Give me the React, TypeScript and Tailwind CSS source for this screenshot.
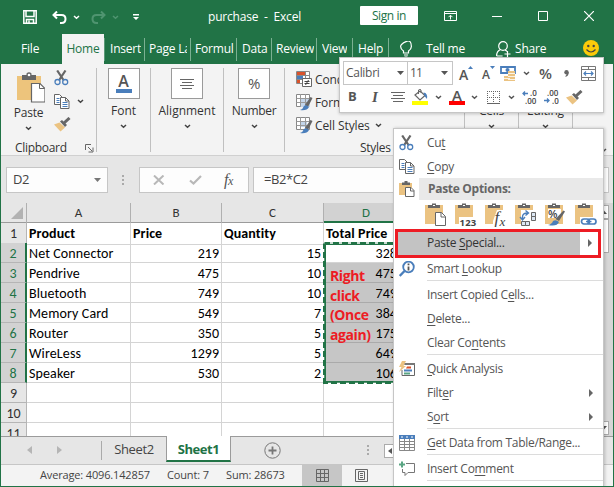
import React from "react";

type P = { className?: string };

const Chevron = ({ className = "" }: P) => (
  <svg width="7" height="5" viewBox="0 0 7 5" className={`shrink-0 ${className}`} fill="none" stroke="currentColor" strokeWidth="1.5">
    <path d="M1 1l2.5 2.3L6 1" />
  </svg>
);

const Triangle = ({ className = "" }: P) => (
  <svg width="7" height="4" viewBox="0 0 7 4" className={`shrink-0 ${className}`} fill="currentColor">
    <path d="M0 0h7L3.5 4z" />
  </svg>
);

const Scissors = () => (
  <svg width="16" height="16" viewBox="0 0 16 16" fill="none" className="shrink-0">
    <path d="M3.2 0.5l6.3 9.5M11.5 0.5L5.200 10" stroke="#666" strokeWidth="2.200" />
    <circle cx="3.500" cy="12" r="2.500" stroke="#4a7ebb" strokeWidth="1.300" />
    <circle cx="11.200" cy="12" r="2.500" stroke="#4a7ebb" strokeWidth="1.300" />
  </svg>
);

const CopyIcon = () => (
  <svg width="16" height="15" viewBox="0 0 16 15" fill="#fff" stroke="#666" className="shrink-0">
    <path d="M.5 .5h5l3 3v7h-8z" />
    <path d="M2.500 4.500h3M2.500 6.500h3M2.500 8.500h3" stroke="#4a7ebb" />
    <path d="M6.500 3.500h5l3.500 3.500v7.500h-8.500z" />
    <path d="M11.500 3.500v3.500h3.500" fill="none" />
    <path d="M8.500 8.500h5M8.500 10.500h5M8.500 12.500h5" stroke="#4a7ebb" />
  </svg>
);

const Brush = () => (
  <svg width="17" height="15" viewBox="0 0 17 15" className="shrink-0">
    <path d="M0 7.500l5.500-2 5.500 5L6.500 14.500z" fill="#ebc382" />
    <path d="M6 4.500l2-1.500 5 5-2 2z" fill="#666" />
    <path d="M9.500 6.500L15.500 1" stroke="#666" strokeWidth="3" />
  </svg>
);

const PasteBig = () => (
  <svg width="28" height="31" viewBox="0 0 28 31" className="shrink-0">
    <path d="M0 4h24v24H0z" fill="#edc47c" />
    <path d="M5 3h4.500V1.500Q12 -1 14.500 1.500V3H19v5H5z" fill="#666" />
    <circle cx="12" cy="3" r="1.300" fill="#fff" />
    <path d="M14.500 11.500h8.500l5 5v13.500H14.500z" fill="#fff" stroke="#666" strokeWidth="1.200" />
    <path d="M22.500 11.500v5h5" fill="none" stroke="#666" />
  </svg>
);

const PasteSmall = () => (
  <svg width="16" height="16" viewBox="0 0 16 16" className="shrink-0">
    <path d="M0 2h13v12H0z" fill="#ebc382" />
    <path d="M3 1.500h2.500V0h3v1.500H11V4H3z" fill="#666" />
    <path d="M6.500 6.500h5.500l3 3v6H6.500z" fill="#fff" stroke="#666" />
    <path d="M11.500 6.500v3.500h3.500" fill="none" stroke="#666" />
  </svg>
);

const PasteOption = ({ kind }: { kind: string }) => (
  <svg width="22" height="24" viewBox="0 0 22 24" className="shrink-0">
    <path d="M0 2h18v19H0z" fill="#ebc382" />
    <path d="M3 2h4V.5h4V2h4v3H3z" fill="#666" />
    <path d="M8 2h2v1H8z" fill="#fff" />
    {kind === "paste" && (
      <g fill="#fff" stroke="#666">
        <path d="M10.500 9.500h6l4 4v9h-10z" />
        <path d="M16 9.500v4.500h4.500" fill="none" />
      </g>
    )}
    {kind === "values" && (
      <g>
        <path d="M4 14h14v8H4z" fill="#fff" />
        <text x="4.500" y="23" fontSize="9.500" fontWeight="700" fill="#444" fontFamily="Open Sans, sans-serif" textLength="16.500">123</text>
      </g>
    )}
    {kind === "fx" && (
      <g>
        <path d="M12 7h8v15H8v-4z" fill="#fff" />
        <text x="9.500" y="20" fontSize="17" fontStyle="italic" fill="#444" fontFamily="Liberation Serif, serif">f</text>
        <text x="14.500" y="22.500" fontSize="13" fontStyle="italic" fill="#444" fontFamily="Liberation Serif, serif">x</text>
      </g>
    )}
    {kind === "transpose" && (
      <g>
        <path d="M6 7h12v14H6z" fill="#fff" />
        <path d="M7.500 16v-2q0-4 5-4M10.500 7.500l3 2.500-3 2.500M5 14l2.500 3L10 14" fill="none" stroke="#4a7ebb" strokeWidth="1.400" />
        <path d="M16.500 9.500h4v4h-4zM16.500 13.500h4v4h-4zM6.500 18.500h4v4h-4zM10.500 18.500h4v4h-4z" fill="#dce7f3" stroke="#666" />
      </g>
    )}
    {kind === "format" && (
      <g>
        <path d="M3 6h13v9H3z" fill="#fff" />
        <text x="3" y="14.500" fontSize="11" fontWeight="600" fill="#444" fontFamily="Open Sans, sans-serif">%</text>
        <path d="M10.500 16l8-8.500 1.500 1-6 9.500z" fill="#666" />
        <path d="M3 22q4-1 5-4 3-2 6 1-2 5-11 3z" fill="#4a7ebb" />
      </g>
    )}
    {kind === "link" && (
      <g>
        <path d="M5 14h13v7H5z" fill="#fff" />
        <rect x="6.500" y="16" width="8" height="5" rx="2.500" fill="none" stroke="#4a7ebb" strokeWidth="1.700" />
        <rect x="13" y="16" width="8" height="5" rx="2.500" fill="none" stroke="#4a7ebb" strokeWidth="1.700" />
        <path d="M11 18.500h5.500" stroke="#4a7ebb" strokeWidth="1.400" />
      </g>
    )}
  </svg>
);

const StyleIcon = ({ kind }: { kind: string }) => (
  <svg width="17" height="17" viewBox="0 0 17 17" className="shrink-0">
    <path d="M.5 .5h13v12H.5z" fill="#fff" stroke="#888" />
    {kind === "cond" ? (
      <g>
        <path d="M1 1h8v3H1zM1 9h3v3H1z" fill="#d9532c" />
        <path d="M1 5h6v3H1z" fill="#4a7ebb" />
        <path d="M.5 4.500h13M.5 8.500h13M9.500 0v13" stroke="#888" />
        <path d="M6.500 7.500h9v8h-9z" fill="#fff" stroke="#666" />
        <path d="M8.500 10.500h5M8.500 12.500h5M12.500 9l-3 5" stroke="#444" />
      </g>
    ) : (
      <g>
        <path d={kind === "table" ? "M5 5h9v8H5z" : "M4 4h7v6H4z"} fill="#c3d5ea" />
        <path d="M.5 4.500h13M.5 8.500h13M4.500 0v13M9.500 0v13" stroke="#999" />
        <path d="M9 11l5.500-8 2 1-4.500 9z" fill="#666" />
        <path d="M4 16q3-1 4-4 2-2 5 1-2 4-9 3z" fill="#4a7ebb" />
      </g>
    )}
  </svg>
);

const tabs = [
  { name: "Insert", c: "w-[40px] pl-[5px]" },
  { name: "Page La", c: "w-[46px] pl-[4px] pr-[3px]" },
  { name: "Formul", c: "w-[46px] pl-[4px]" },
  { name: "Data", c: "w-[35px] pl-[5px]" },
  { name: "Review", c: "w-[45px] pl-[4px]" },
  { name: "View", c: "w-[36px] pl-[5px]" },
  { name: "Help", c: "w-[36px] pl-[5px]" },
];

const TitleBar = () => (
  <header className="flex h-[34px] items-center text-white">
    <svg width="14" height="14" viewBox="0 0 14 14" className="ml-[22px]" fill="none" stroke="#fff" strokeWidth="1.500">
      <path d="M.8 .8h12.400v12.400H.8zM3 1v5.500h8V1M3.500 13V9.500h7V13M6 10.500V13" />
    </svg>
    <svg width="15" height="13" viewBox="0 0 15 13" className="ml-[15px]" fill="none" stroke="#fff" strokeWidth="2">
      <path d="M5 .5L1.500 4 5 7.500M1.500 4H9.500Q13.500 4 13.500 8T9.500 12H8" />
    </svg>
    <Chevron className="ml-[6px]" />
    <svg width="15" height="13" viewBox="0 0 15 13" className="ml-[11px]" fill="none" stroke="#4f9470" strokeWidth="2">
      <path d="M10 .5L13.500 4 10 7.500M13.500 4H5.500Q1.500 4 1.500 8T5.500 12H7" />
    </svg>
    <Chevron className="ml-[6px] text-[#4f9470]" />
    <svg width="6" height="7" viewBox="0 0 6 7" className="ml-[14px]" fill="#fff"><path d="M0 0h6v1.500H0zM0 3h6L3 6z" /></svg>
    <span className="ml-[69px] w-[152px] text-[12px] tracking-[-0.2px] whitespace-pre">purchase  -  Excel</span>
    <div className="mb-[3px] flex h-[19px] w-[58px] items-center justify-center rounded-[1px] bg-white text-[12px] tracking-[-0.4px] text-[#217346]">Sign in</div>
    <svg width="13" height="10" viewBox="0 0 13 10" className="mb-[3px] ml-[26px]" fill="none" stroke="#fff"><path d="M.5 .5h12v9H.5zM.5 2.500h12M6.500 8.500v-4M4.500 6.200l2-2 2 2" /></svg>
    <svg width="10" height="10" viewBox="0 0 10 10" className="mb-[3px] ml-[35px]" stroke="#fff"><path d="M0 5.500h10" /></svg>
    <svg width="10" height="10" viewBox="0 0 10 10" className="mb-[3px] ml-[36px]" fill="none" stroke="#fff"><path d="M.5 .5h9v9h-9z" /></svg>
    <svg width="10" height="10" viewBox="0 0 10 10" className="mb-[3px] ml-[36px]" stroke="#fff" strokeWidth="1.200"><path d="M0 0l10 10M10 0L0 10" /></svg>
  </header>
);

const TabBar = () => (
  <nav className="flex h-[30px] items-center text-[12px] tracking-[-0.2px] text-white">
    <span className="w-[61px] pl-[20px]">File</span>
    <div className="flex h-full w-[42px] items-center justify-center bg-[#f3f3f3] text-[#217346]">Home</div>
    <div className="h-[23px] w-px bg-[#5c9a78]" />
    {tabs.map((t) => (
      <div key={t.name} className={`${t.c} flex h-[23px] shrink-0 items-center border-r border-[#7bb092]`}>
        <span className="overflow-hidden whitespace-nowrap">{t.name}</span>
      </div>
    ))}
    <svg width="12" height="17" viewBox="0 0 12 17" className="ml-[11px] shrink-0" fill="none" stroke="#fff" strokeWidth="1.200">
      <path d="M3.500 12V10Q.6 8 .6 5.500T6 .6t5.400 4.900Q11.400 8 8.500 10v2zM4 14h4M4.500 16h3" />
    </svg>
    <span className="ml-[14px] w-[70px] shrink-0">Tell me</span>
    <svg width="15" height="16" viewBox="0 0 15 16" className="shrink-0" fill="none" stroke="#fff" strokeWidth="1.200">
      <circle cx="7" cy="5" r="4.300" />
      <path d="M.6 15q0-5 4-6.500M9 9q1.500.8 2 1.500M.6 15h6M11.500 10v6M8.500 13h6" />
    </svg>
    <span className="ml-[4px] w-[68px] shrink-0">Share</span>
    <svg width="16" height="16" viewBox="0 0 16 16" className="mb-[2px] shrink-0">
      <circle cx="8" cy="8" r="8" fill="#fbcb0a" />
      <circle cx="5.300" cy="6" r="1.200" fill="#444" /><circle cx="10.700" cy="6" r="1.200" fill="#444" />
      <path d="M3.500 9.500q4.500 5 9 0" fill="none" stroke="#444" strokeWidth="1.200" />
    </svg>
  </nav>
);

const BigGroup = ({ label, className, children }: { label: string; className: string; children?: React.ReactNode }) => (
  <section className={`flex h-[84px] shrink-0 flex-col items-center border-r border-[#c0c0c0] ${className}`}>
    <div className="flex h-[31px] w-[32px] items-center justify-center border border-[#9a9a9a] bg-white">{children}</div>
    <span className="mt-[4px] h-[16px] text-[12px] leading-[16px]">{label}</span>
    <Chevron className="mt-[5px] text-[#444]" />
  </section>
);

const Ribbon = () => (
  <div className="flex h-[92px] border-b border-[#d0d0d0] bg-[#f3f3f3] pt-[4px] text-[#333]">
    <section className="flex h-[84px] w-[96px] shrink-0 flex-col border-r border-[#c0c0c0]">
      <div className="flex h-[73px] shrink-0">
        <div className="flex w-[53px] flex-col items-center pt-[4px] pl-[6px]">
          <PasteBig />
          <span className="mt-[2px] mr-[4px] h-[16px] text-[12px] leading-[16px] tracking-[-0.2px]">Paste</span>
          <Chevron className="mt-[5px] mr-[4px] text-[#444]" />
        </div>
        <div className="flex flex-col pt-[2px]">
          <div className="h-[24px]"><Scissors /></div>
          <div className="flex h-[23px] items-start"><CopyIcon /><Chevron className="mt-[5px] ml-[7px] text-[#444]" /></div>
          <Brush />
        </div>
      </div>
      <div className="flex h-[14px] shrink-0 items-center pl-[14px] text-[12px]">
        <span className="w-[70px] tracking-[-0.3px]">Clipboard</span>
        <svg width="9" height="9" viewBox="0 0 9 9" fill="none" stroke="#666"><path d="M.5 6V.5H6M3 3l4 4M8 3.500V8H3.500" /></svg>
      </div>
    </section>
    <BigGroup label="Font" className="w-[54px]">
      <div className="flex flex-col items-center"><span className="text-[16px] leading-[15px] font-semibold text-[#555]">A</span><span className="h-[4px] w-[16px] bg-[#4a7ebb]" /></div>
    </BigGroup>
    <BigGroup label="Alignment" className="w-[73px]">
      <svg width="14" height="12" viewBox="0 0 14 12" stroke="#666"><path d="M0 1.500h14M2 4.500h10M0 7.500h14M2 10.500h10" /></svg>
    </BigGroup>
    <BigGroup label="Number" className="w-[61px] tracking-[-0.3px]"><span className="text-[15px] text-[#555]">%</span></BigGroup>
    <section className="flex h-[84px] w-[180px] shrink-0 flex-col border-r border-[#c0c0c0] pl-[11px] text-[12px] tracking-[-0.1px]">
      {["cond", "table", "cell"].map((k, i) => (
        <div key={k} className="flex h-[23px] shrink-0 items-center gap-[2px]">
          <StyleIcon kind={k} />
          <span className="whitespace-nowrap">{["Conditional", "Format as", "Cell Styles"][i]}</span>
          {i === 2 && <Chevron className="ml-[3px] text-[#444]" />}
        </div>
      ))}
      <span className="shrink-0 pl-[64px] leading-[22px] tracking-[-0.3px]">Styles</span>
    </section>
    {["Cells", "Editing"].map((l) => (
      <section key={l} className="flex h-[84px] w-[54px] shrink-0 flex-col items-center border-r border-[#c0c0c0] pt-[35px] text-[12px]">
        <span className="h-[16px] leading-[16px] tracking-[-0.2px]">{l}</span>
        <Chevron className="mt-[5px] text-[#444]" />
      </section>
    ))}
    <div className="flex flex-1 items-end justify-end pr-[6px] pb-[2px]"><Chevron className="text-[#555]" /></div>
  </div>
);

const FormulaBar = () => (
  <div className="flex h-[47px] items-center bg-[#e6e6e6] pl-[5px] text-[13px] tracking-[-0.4px] text-[#444]">
    <div className="flex h-[26px] w-[102px] items-center justify-between border border-[#c6c6c6] bg-[#fdfdfd] pr-[6px] pl-[6px]">
      <span>D2</span><Triangle className="text-[#777]" />
    </div>
    <svg width="3" height="12" viewBox="0 0 3 12" className="ml-[14px]" fill="#aaa"><path d="M0 1h2v2H0zM0 5h2v2H0zM0 9h2v2H0z" /></svg>
    <div className="ml-[14px] flex h-[26px] w-[110px] items-center border border-[#c6c6c6] bg-[#fdfdfd]">
      <svg width="12" height="10" viewBox="0 0 12 10" className="ml-[13px]" stroke="#b8b8b8" strokeWidth="2"><path d="M1 .5l9.500 9M10.500 .5L1 9.500" /></svg>
      <svg width="13" height="10" viewBox="0 0 13 10" className="ml-[24px]" fill="none" stroke="#b8b8b8" strokeWidth="2.200"><path d="M1 5.500l3.500 3L12 1" /></svg>
      <span className="ml-[22px] font-['Liberation_Serif',serif] text-[16px] tracking-[-0.5px] text-[#555] italic">f<span className="text-[12px]">x</span></span>
    </div>
    <div className="ml-[4px] flex h-[26px] w-[356px] items-center border border-[#c6c6c6] bg-[#fdfdfd] pl-[10px]">=B2*C2</div>
  </div>
);

const data: [string, string, string, string][] = [
  ["Net Connector", "219", "15", "3285"],
  ["Pendrive", "475", "10", "4750"],
  ["Bluetooth", "749", "10", "7490"],
  ["Memory Card", "549", "7", "3843"],
  ["Router", "350", "5", "1750"],
  ["WireLess", "1299", "5", "6495"],
  ["Speaker", "530", "2", "1060"],
  ["", "", "", ""],
  ["", "", "", ""],
  ["", "", "", ""],
];

const grid = "grid grid-cols-[26px_104px_91px_102px_84px_1fr]";

const Sheet = () => (
  <div className="relative flex h-[233px] overflow-hidden bg-white font-['Carlito','Lato',sans-serif] text-[14px] text-black">
    <div className="flex-1">
      <div className={`${grid} h-[20px] border-b border-[#9b9b9b] bg-[#e6e6e6] text-center text-[13px] leading-[20px] text-[#333]`}>
        <div className="flex items-end justify-end border-r border-[#b0b0b0] pr-[3px] pb-[4px]">
          <svg width="12" height="12" viewBox="0 0 12 12" fill="#b2b2b2"><path d="M12 0v12H0z" /></svg>
        </div>
        <div className="border-r border-[#b0b0b0]">A</div>
        <div className="border-r border-[#b0b0b0]">B</div>
        <div className="border-r border-[#b0b0b0]">C</div>
        <div className="h-[20px] border-b-2 border-[#217346] bg-[#d2d2d2] text-[#217346]">D</div>
      </div>
      <div className={`${grid} h-[20px] leading-[21px] font-bold tracking-[0.1px]`}>
        <div className="border-r border-b border-[#b5b5b5] bg-[#e6e6e6] text-center font-normal text-[#333]">1</div>
        {["Product", "Price", "Quantity", "Total Price"].map((h) => (
          <div key={h} className="border-r border-b border-[#d4d4d4] pl-[2px] whitespace-nowrap">{h}</div>
        ))}
        <div className="border-b border-[#d4d4d4]" />
      </div>
      {data.map((r, i) => (
        <div key={i} className={`${grid} h-[20px] leading-[21px]`}>
          <div className={`h-[20px] border-b text-center ${i < 7 ? "border-r-2 border-r-[#217346] border-b-[#b5b5b5] bg-[#d2d2d2] text-[#217346]" : "border-r border-[#b5b5b5] bg-[#e6e6e6] text-[#333]"}`}>{i + 2}</div>
          <div className="h-[20px] border-r border-b border-[#d4d4d4] pl-[2px] tracking-[0.12px] whitespace-nowrap">{r[0]}</div>
          <div className="h-[20px] border-r border-b border-[#d4d4d4] pr-[2px] text-right">{r[1]}</div>
          <div className="h-[20px] border-r border-b border-[#d4d4d4] pr-[2px] text-right">{r[2]}</div>
          <div className={`h-[20px] border-r border-b pr-[3px] text-right ${i > 0 && i < 7 ? "border-[#aaa] bg-[#c6c6c6]" : "border-[#d4d4d4]"}`}>{r[3]}</div>
          <div className="h-[20px] border-b border-[#d4d4d4]" />
        </div>
      ))}
    </div>
    <div className="flex w-[16px] flex-col bg-[#d6d6d6] pr-[4px] text-[#555]">
      <div className="mt-[2px] flex h-[14px] items-center justify-end border border-[#ababab] bg-white pr-px"><Triangle className="rotate-180" /></div>
      <div className="h-[34px] border border-[#ababab] bg-white" />
      <div className="mt-auto mb-px flex h-[14px] items-center justify-end border border-[#ababab] bg-white pr-px"><Triangle /></div>
    </div>
    <svg width="90" height="145" viewBox="0 0 90 145" className="absolute top-[38px] left-[321px]" fill="none" stroke="#217346" strokeWidth="3">
      <path d="M2.500 2.500H89M2.500 2.500v139H89" />
      <path d="M8 2H89M1.500 8v130M6 142.500H89" stroke="#fff" strokeWidth="1.500" strokeDasharray="3 6" />
    </svg>
    <div className="absolute top-[63px] left-[329px] font-['Open_Sans',sans-serif] text-[14px] leading-[19.500px] font-bold tracking-[-0.4px] text-[#ed1c24]">
      Right<br />click<br />(Once<br />again)
    </div>
  </div>
);

const SheetTabs = () => (
  <div className="flex h-[28px] items-start border-t border-[#9b9b9b] bg-[#e6e6e6] text-[13px] tracking-[-0.4px] text-[#444]">
    <div className="flex h-[26px] w-[101px] items-center">
      <svg width="5" height="8" viewBox="0 0 5 8" className="ml-[26px]" fill="#b5b5b5"><path d="M5 0v8L0 4z" /></svg>
      <svg width="5" height="8" viewBox="0 0 5 8" className="ml-[25px]" fill="#b5b5b5"><path d="M0 0v8l5-4z" /></svg>
      <div className="ml-auto h-[19px] w-px bg-[#aaa]" />
    </div>
    <div className="flex h-[26px] w-[64px] items-center justify-center">Sheet2</div>
    <div className="-mt-px flex h-[26px] w-[65px] items-center justify-center border-x border-b-2 border-x-[#9b9b9b] border-b-[#217346] bg-white pt-[4px] font-bold text-[#217346]">Sheet1</div>
    <svg width="17" height="17" viewBox="0 0 17 17" className="mt-[5px] ml-[33px]" fill="none" stroke="#777"><circle cx="8.500" cy="8.500" r="7.700" /><path d="M4.500 8.500h8M8.500 4.500v8" strokeWidth="1.800" /></svg>
    <svg width="3" height="12" viewBox="0 0 3 12" className="mt-[8px] ml-[86px]" fill="#aaa"><path d="M0 0h2v2H0zM0 4h2v2H0zM0 8h2v2H0z" /></svg>
    <div className="mt-[7px] ml-[14px] flex h-[14px] w-[30px] items-center border border-[#ababab] bg-white pl-[3px]">
      <svg width="4" height="6" viewBox="0 0 4 6" fill="#555"><path d="M4 0v6L0 3z" /></svg>
    </div>
  </div>
);

const StatusBar = () => (
  <footer className="flex h-[22px] items-center border-t border-[#c6c6c6] bg-[#f3f3f3] pl-[39px] text-[11px] tracking-[-0.15px] text-[#444]">
    <span className="w-[127px]">Average: 4096.142857</span>
    <span className="w-[59px]">Count: 7</span>
    <span className="w-[76px]">Sum: 28673</span>
    <div className="flex h-full w-[40px] items-center justify-center bg-[#c6c6c6]">
      <svg width="13" height="13" viewBox="0 0 13 13" fill="none" stroke="#666"><path d="M.5 .5h12v12H.5zM.5 4.500h12M.5 8.500h12M4.500 .5v12M8.500 .5v12" /></svg>
    </div>
    <svg width="13" height="13" viewBox="0 0 13 13" className="ml-[13px]" fill="none" stroke="#666"><path d="M.5 .5h12v12H.5zM3.500 2.500h6v8h-6zM5 4.500h3M5 6.500h3M5 8.500h3" /></svg>
  </footer>
);

const MiniToolbar = () => (
  <div className="absolute top-[57px] left-[339px] h-[56px] w-[265px] border border-[#c6c6c6] bg-white pl-[3px] shadow-[0_1px_3px_rgba(0,0,0,0.2)]">
    <div className="mt-[3px] flex h-[24px] items-center text-[#555]">
      <div className="flex h-[24px] w-[65px] shrink-0 items-center justify-between border border-[#c6c6c6] pr-[3px] pl-[2px] text-[12px] tracking-[-0.3px]"><span>Calibri</span><Triangle /></div>
      <div className="-ml-px flex h-[24px] w-[46px] shrink-0 items-center justify-between border border-[#c6c6c6] pr-[4px] pl-[2px] text-[12px] tracking-[-0.8px]"><span>11</span><Triangle /></div>
      <div className="ml-[6px] flex w-[23px] shrink-0 items-center">
        <span className="pt-[2px] text-[14px] font-semibold">A</span>
        <svg width="5" height="3" viewBox="0 0 5 3" className="-mt-[11px] shrink-0" fill="#4a7ebb"><path d="M0 3h5L2.500 0z" /></svg>
      </div>
      <div className="flex w-[18px] shrink-0 items-center">
        <span className="pt-[4px] text-[12px] font-semibold">A</span>
        <svg width="5" height="3" viewBox="0 0 5 3" className="-mt-[11px] shrink-0" fill="#4a7ebb"><path d="M0 0h5L2.500 3z" /></svg>
      </div>
      <svg width="16" height="17" viewBox="0 0 16 17" className="shrink-0">
        <path d="M1 2h14v6H1z" fill="#fff" stroke="#4a7ebb" strokeWidth="1.800" /><circle cx="7.500" cy="5" r="2" fill="#4a7ebb" />
        <path d="M8 6h7v10H8zM4 11h7v5H4z" fill="#ebc382" /><path d="M8 8.500h7M8 11.500h7M8 14.500h7M4 13.500h6" stroke="#fff" strokeWidth=".8" />
      </svg>
      <Chevron className="ml-[7px]" />
      <span className="ml-[9px] w-[25px] shrink-0 text-[15px] leading-none font-semibold tracking-[-0.5px]">%</span>
      <svg width="5" height="7" viewBox="0 0 5 7" fill="#666" className="shrink-0"><circle cx="2.500" cy="2.300" r="2.200" /><path d="M4.700 2.500Q4.700 6 1.500 7V6Q3 5 2.500 3z" /></svg>
      <svg width="15" height="15" viewBox="0 0 15 15" className="ml-[12px] shrink-0" fill="none" stroke="#777" strokeWidth="1"><path d="M.5 .5h14v14H.5zM.5 3.500h14M.5 11.500h14M7.500 .5v3M7.500 11.500v3" /><path d="M3 7.500h9M5 5.500l-2 2 2 2M10 5.500l2 2-2 2" stroke="#4a7ebb" strokeWidth="1.200" /></svg>
    </div>
    <div className="flex h-[24px] items-center text-[#555]">
      <span className="ml-[5px] w-[24px] shrink-0 text-[13px] font-bold">B</span>
      <span className="w-[19px] shrink-0 font-['Liberation_Serif',serif] text-[15px] font-bold italic">I</span>
      <svg width="14" height="11" viewBox="0 0 14 11" stroke="#666" className="shrink-0"><path d="M0 .5h14M2 3.500h10M0 6.500h14M2 9.500h10" /></svg>
      <svg width="17" height="16" viewBox="0 0 17 16" className="ml-[7px] shrink-0"><path d="M0 12h16v4H0z" fill="#ffff00" /><path d="M3 6l5-4 5 4.500-5 4.500z" fill="#fff" stroke="#666" strokeWidth="1.200" /><path d="M6.500 5V1Q8 -.5 9 1v3" fill="none" stroke="#666" /><path d="M11.500 3.500Q16 4 15 10l-2.500-3z" fill="#4a7ebb" /></svg>
      <Chevron className="ml-[6px]" />
      <div className="ml-[7px] flex w-[16px] shrink-0 flex-col items-center"><span className="text-[15px] leading-[12px] font-semibold">A</span><span className="h-[4px] w-[16px] bg-[#ff0000]" /></div>
      <Chevron className="ml-[6px]" />
      <svg width="13" height="13" viewBox="0 0 13 13" className="ml-[9px] shrink-0" fill="none" stroke="#666"><path d="M.5 0v12M6.500 0v12M12.500 0v12M0 .5h13M0 6.500h13" strokeDasharray="1 1" /><path d="M0 12.500h13" /></svg>
      <Chevron className="ml-[8px]" />
      <svg width="15" height="14" viewBox="0 0 15 14" className="ml-[7px] shrink-0" fontSize="8" fontWeight="600" fontFamily="Open Sans, sans-serif" fill="#444"><path d="M6 3.500H1M3 1.500l-2 2 2 2" fill="none" stroke="#4a7ebb" strokeWidth="1.300" /><text x="8" y="6">.0</text><text x="3" y="13.500">.00</text></svg>
      <svg width="15" height="14" viewBox="0 0 15 14" className="ml-[7px] shrink-0" fontSize="8" fontWeight="600" fontFamily="Open Sans, sans-serif" fill="#444"><path d="M0 10.500h5M3 8.500l2 2-2 2" fill="none" stroke="#4a7ebb" strokeWidth="1.300" /><text x="3" y="6">.00</text><text x="8" y="13.500">.0</text></svg>
      <span className="ml-[7px]"><Brush /></span>
    </div>
  </div>
);

const Label = ({ text }: { text: string }) => {
  const [a, u, b] = text.split("_");
  return <span className="whitespace-nowrap">{a}{u && <span className="underline underline-offset-2">{u}</span>}{b}</span>;
};

const Item = ({ text, icon, arrow }: { text: string; icon?: React.ReactNode; arrow?: boolean }) => (
  <div className="flex h-[24px] shrink-0 items-center pt-px pr-[10px]">
    <div className="w-[33px] shrink-0 pl-[5px]">{icon}</div>
    <Label text={text} />
    {arrow && <svg width="4" height="8" viewBox="0 0 4 8" className="ml-auto" fill="#666"><path d="M0 0v8l4-4z" /></svg>}
  </div>
);

const Sep = () => <div className="ml-[33px] h-[2px] shrink-0 border-t border-[#dcdcdc]" />;

const ContextMenu = () => (
  <div className="absolute top-[128px] left-[393px] flex h-[359px] w-[211px] flex-col overflow-hidden border border-[#c6c6c6] border-b-[#888] bg-white pt-px text-[12px] tracking-[-0.3px] text-[#555] shadow-[1px_0_3px_rgba(0,0,0,0.2)]">
    <Item text="Cu_t_" icon={<Scissors />} />
    <Item text="_C_opy" icon={<CopyIcon />} />
    <div className="flex h-[24px] shrink-0">
      <div className="w-[25px] pt-[3px] pl-[5px]"><PasteSmall /></div>
      <div className="flex h-[22px] flex-1 items-center bg-[#e9e9e9] pl-[9px] font-bold text-[#666]">Paste Options:</div>
    </div>
    <div className="flex h-[27px] shrink-0 gap-[8px] pt-[1px] pl-[31px]">
      {["paste", "values", "fx", "transpose", "format", "link"].map((k) => <PasteOption key={k} kind={k} />)}
    </div>
    <div className="mr-[2px] ml-px flex h-[29px] shrink-0 items-stretch border-3 border-[#ed1c24] bg-[#c3c3c3] text-[#333]">
      <div className="flex flex-1 items-center pb-[2px] pl-[29px]"><Label text="Paste _S_pecial..." /></div>
      <div className="flex w-[18px] items-center bg-white pb-[2px] pl-[8px]"><svg width="4" height="8" viewBox="0 0 4 8" fill="#666"><path d="M0 0v8l4-4z" /></svg></div>
    </div>
    <div className="-mt-[2px] shrink-0" />
    <Item text="Smart _L_ookup" icon={<svg width="16" height="16" viewBox="0 0 16 16" fill="none" stroke="#4a7ebb" strokeWidth="1.800"><circle cx="9.500" cy="6" r="5.300" /><path d="M5.500 10L.7 15" strokeWidth="2.400" /><path d="M9.500 5.500v4M9.500 2.500v1.800" stroke="#555" /></svg>} />
    <Sep />
    <Item text="Insert Copied C_e_lls..." />
    <Item text="_D_elete..." />
    <Item text="Clear Co_n_tents" />
    <Sep />
    <Item text="_Q_uick Analysis" icon={<svg width="16" height="16" viewBox="0 0 16 16"><path d="M4.500 2.500h11v12H3V9" fill="#fff" stroke="#666" /><path d="M6 2h10v2H5z" fill="#777" /><path d="M3 0h4L4.500 5H7L0 11l2.500-5H0z" fill="#ebc382" /><path d="M8 5.500h4v2H7z" fill="#d9532c" /><path d="M5 8.500h8v2H5z" fill="#4a7ebb" /><path d="M5 11.500h6v2H5z" fill="#5aa583" /></svg>} />
    <Item text="Filt_e_r" arrow />
    <Item text="S_o_rt" arrow />
    <Sep />
    <Item text="_G_et Data from Table/Range..." icon={<svg width="16" height="16" viewBox="0 0 16 16" fill="none" stroke="#888"><path d="M.5 3.500h15v12H.5zM.5 6.500h15M.5 9.500h15M.5 12.500h15M5.500 4v12M10.500 4v12" /><path d="M0 0h16v4H0z" fill="#4a7ebb" stroke="none" /><path d="M2 2h2M7 2h2M12 2h2" stroke="#fff" /></svg>} />
    <Sep />
    <Item text="Insert Co_m_ment" icon={<svg width="16" height="16" viewBox="0 0 16 16" fill="none"><path d="M7 2.500h8.500v9H9l-3 3v-3H3.500V8" stroke="#777" /><path d="M0 3.500h6M3 .5v6" stroke="#5aa583" strokeWidth="2" /></svg>} />
    <Sep />
  </div>
);

export default function App() {
  return (
    <div className="relative flex h-[487px] w-[614px] flex-col overflow-hidden border-x border-b border-[#217346] bg-[#217346] font-['Open_Sans',sans-serif] [font-stretch:90%]">
      <TitleBar />
      <TabBar />
      <Ribbon />
      <FormulaBar />
      <Sheet />
      <SheetTabs />
      <StatusBar />
      <div className="absolute inset-0 -left-px">
        <MiniToolbar />
        <ContextMenu />
      </div>
    </div>
  );
}
